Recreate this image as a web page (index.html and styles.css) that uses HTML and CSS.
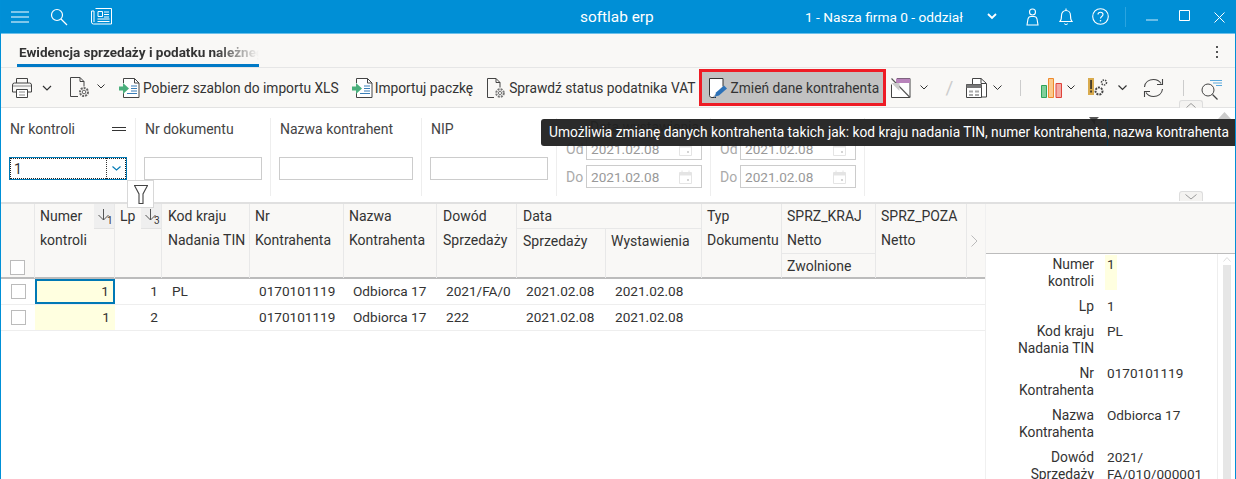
FILE: index.html
```html
<!DOCTYPE html>
<html lang="pl">
<head>
<meta charset="utf-8">
<title>softlab erp</title>
<link rel="stylesheet" href="styles.css">
</head>
<body>
<div class="app">
  <header class="topbar">
    <svg class="ti t-menu" width="18" height="12" viewBox="0 0 18 12"><path d="M0 1h18M0 6h18M0 11h18" stroke="#fff" fill="none"/></svg>
    <svg class="ti t-search" width="18" height="18" viewBox="0 0 18 18"><circle cx="7" cy="7" r="5.500" stroke="#fff" fill="none" stroke-width="1.200"/><path d="M11 11l6 6" stroke="#fff" stroke-width="1.200"/></svg>
    <svg class="ti t-news" width="21" height="17" viewBox="0 0 21 17"><path d="M4.500.5h16v15.500h-18a2 2 0 0 1-2-2V3h2.500v11" stroke="#fff" fill="none"/><path d="M7 3.500h4.500v5H7zM13 4h5M13 6.500h5M13 9h5M6.500 11h12M6.500 13.500h12" stroke="#fff" fill="none"/></svg>
    <span class="app-title">softlab erp</span>
    <span class="company">1 - Nasza firma 0 - oddział</span>
    <svg class="ti t-chev" width="10" height="7" viewBox="0 0 10 7"><path d="M1 1l4 4 4-4" stroke="#fff" stroke-width="1.800" fill="none"/></svg>
    <svg class="ti t-user" width="13" height="18" viewBox="0 0 13 18"><circle cx="6.500" cy="4" r="3" stroke="#fff" fill="none" stroke-width="1.100"/><path d="M1 17l1-6c.3-1.500 1.500-2.500 3-2.500h3c1.500 0 2.700 1 3 2.500l1 6z" stroke="#fff" fill="none" stroke-width="1.100"/></svg>
    <svg class="ti t-bell" width="14" height="18" viewBox="0 0 14 18"><path d="M1 13.500c1.500-1.500 1.500-3 1.500-6 0-3 2-5 4.500-5s4.500 2 4.500 5c0 3 0 4.500 1.500 6zM7 .5v2M5.500 15.500c.3 1.400 2.700 1.400 3 0" stroke="#fff" fill="none" stroke-width="1.100"/></svg>
    <svg class="ti t-help" width="17" height="17" viewBox="0 0 17 17"><circle cx="8.500" cy="8.500" r="7.800" stroke="#fff" fill="none" stroke-width="1.100"/><path d="M6 6.500c0-3 5-3 5 0 0 2-2.500 2-2.500 4" stroke="#fff" fill="none" stroke-width="1.100"/><circle cx="8.500" cy="12.800" r=".8" fill="#fff"/></svg>
    <span class="win-sep"></span>
    <svg class="ti t-min" width="12" height="2" viewBox="0 0 12 2"><path d="M0 1h12" stroke="#cfeaf8" stroke-width="1"/></svg>
    <svg class="ti t-max" width="11" height="11" viewBox="0 0 11 11"><path d="M.5.500h10v10H.5z" stroke="#fff" fill="none"/></svg>
    <svg class="ti t-close" width="11" height="11" viewBox="0 0 11 11"><path d="M.5.500l10 10M10.500.500l-10 10" stroke="#fff" fill="none"/></svg>
  </header>

  <div class="tabbar">
    <div class="tab"><span class="tab-text">Ewidencja sprzedaży i podatku należnego</span></div>
    <svg class="kebab" width="3" height="13" viewBox="0 0 3 13"><path d="M0 0h2v2H0zM0 5h2v2H0zM0 10h2v2H0z" fill="#555"/></svg>
  </div>

  <div class="toolbar">
    <svg class="b-print" width="20" height="20" viewBox="0 0 20 20"><path d="M4.500 5V.5h11V5M.5 14V7a2 2 0 0 1 2-2h15a2 2 0 0 1 2 2v7h-4M4.500 14H.5" stroke="#444" fill="none"/><path d="M4.500 11.500h11v8h-11z" stroke="#444" fill="#fff"/><path d="M1 8h18" stroke="#888"/><path d="M7 14h6M7 17h6" stroke="#888"/></svg>
    <svg class="chev b-c1" width="10" height="6" viewBox="0 0 10 6"><path d="M1 1l4 4 4-4" stroke="#333" stroke-width="1.200" fill="none"/></svg>
    <svg class="b-doc" width="21" height="21" viewBox="0 0 21 21"><path d="M8 19.500H.5V.5H10l4 4v5" stroke="#444" fill="none"/><path d="M10 .5v4h4" stroke="#444" fill="none"/><circle cx="14" cy="15" r="4" stroke="#666" stroke-width="2" stroke-dasharray="2 1" fill="none"/><circle cx="14" cy="15" r="1.800" stroke="#666" fill="none"/></svg>
    <svg class="chev b-c2" width="8" height="5" viewBox="0 0 8 5"><path d="M.5.500L4 4 7.500.500" stroke="#333" fill="none"/></svg>
    <button class="tbtn b-t1">
      <svg width="21" height="20" viewBox="0 0 21 20"><path d="M4.500 5V.5h11l4.500 4.500v14.500H4.500V15" stroke="#444" fill="#fff"/><path d="M15.500.5V5H20" stroke="#444" fill="none"/><path d="M12 8h6M12 10.500h6M12 13h6M8 15.500h10" stroke="#3b7fb8"/><path d="M0 8.500h4V5l6 5.500-6 5.500v-3.500H0z" fill="#4aaf7c"/></svg>
      <span>Pobierz szablon do importu XLS</span>
    </button>
    <button class="tbtn b-t2">
      <svg width="21" height="20" viewBox="0 0 21 20"><path d="M4.500 5V.5h11l4.500 4.500v14.500H4.500V15" stroke="#444" fill="#fff"/><path d="M15.500.5V5H20" stroke="#444" fill="none"/><path d="M12 8h6M12 10.500h6M12 13h6M8 15.500h10" stroke="#3b7fb8"/><path d="M0 8.500h4V5l6 5.500-6 5.500v-3.500H0z" fill="#4aaf7c"/></svg>
      <span>Importuj paczkę</span>
    </button>
    <button class="tbtn b-t3">
      <svg width="19" height="20" viewBox="0 0 19 20"><path d="M7 19.500H.5V.5H9l4 4v5" stroke="#444" fill="none"/><path d="M9 .5v4h4" stroke="#444" fill="none"/><circle cx="13" cy="15" r="3.800" stroke="#777" stroke-width="2" stroke-dasharray="2 1" fill="none"/><circle cx="13" cy="15" r="1.600" stroke="#777" fill="none"/></svg>
      <span>Sprawdź status podatnika VAT</span>
    </button>
    <button class="tbtn active">
      <svg width="19" height="20" viewBox="0 0 19 20"><path d="M3 19.500c-1.500 0-2.500-1-2.500-2V.5H14v8" stroke="#333" fill="#fff"/><path d="M3 19.500h4" stroke="#333"/><path d="M6 18.500l1-4 8-7 3 3-8 7z" fill="#2d72b8"/><path d="M5 19.500l1.500-1" stroke="#2d72b8"/></svg>
      <span>Zmień dane kontrahenta</span>
    </button>
    <svg class="b-cal" width="20" height="20" viewBox="0 0 20 20"><path d="M.5 6.500V19.500h18.500V.5H6" stroke="#444" fill="#fff"/><path d="M5 .5h14V5H5z" fill="#b883bb"/><path d="M.5.500l18.500 19" stroke="#555" stroke-width="1.100"/><path d="M.5 5h8v8" fill="#ccc"/></svg>
    <svg class="chev b-c3" width="8" height="5" viewBox="0 0 8 5"><path d="M.5.500L4 4 7.500.500" stroke="#333" fill="none"/></svg>
    <span class="slash">/</span>
    <svg class="b-copy" width="21" height="20" viewBox="0 0 21 20"><path d="M6.500 6V.5H15l5.500 5v13.500h-5" stroke="#444" fill="#fff"/><path d="M15 .5v5h5" stroke="#444" fill="none"/><path d="M.5 6.500h15v13H.5z" stroke="#444" fill="#fff"/><path d="M.5 6.500h15v3.500H.5z" fill="#777"/><path d="M3 12.500h4v2H3zM9 12.500h4v2H9zM3 16h4v2H3zM9 16h4v2H9z" fill="#aaa"/></svg>
    <svg class="chev b-c4" width="9" height="6" viewBox="0 0 9 6"><path d="M.5.500L4.500 4.500 8.500.500" stroke="#333" fill="none"/></svg>
    <span class="vsep b-s1"></span>
    <svg class="b-chart" width="21" height="20" viewBox="0 0 21 20"><path d="M.5 7.500h5v12h-5z" fill="#7fcf9a" stroke="#2ea35a"/><path d="M7.500.5h5v19h-5z" fill="#fbc98c" stroke="#ee8a2c"/><path d="M15 5.500h5.500v14H15z" fill="#f4a9a4" stroke="#e0433a"/></svg>
    <svg class="chev b-c5" width="8" height="5" viewBox="0 0 8 5"><path d="M.5.500L4 4 7.500.500" stroke="#333" fill="none"/></svg>
    <svg class="b-warn" width="20" height="20" viewBox="0 0 20 20"><path d="M0 0h6v17H0z" fill="#d9ab4e"/><path d="M2.300 2h1.500v9H2.300zM2.300 12.500h1.500v2H2.300z" fill="#222"/><circle cx="11" cy="13" r="3.500" stroke="#444" stroke-width="2" stroke-dasharray="2 1" fill="none"/><circle cx="16" cy="4.500" r="2.500" stroke="#444" stroke-width="1.500" stroke-dasharray="1.500 1" fill="none"/></svg>
    <svg class="chev b-c6" width="9" height="6" viewBox="0 0 9 6"><path d="M.5.500L4.500 4.500 8.500.500" stroke="#333" stroke-width="1.200" fill="none"/></svg>
    <svg class="b-refresh" width="21" height="20" viewBox="0 0 21 20"><path d="M1.500 9C2 4 6 1.500 10.500 1.500c3.500 0 6 1.500 7.500 4" stroke="#444" fill="none" stroke-width="1.100"/><path d="M19.500 1v5.500H14" stroke="#444" fill="none" stroke-width="1.100"/><path d="M19.500 11c-.5 5-4.500 7.500-9 7.500-3.500 0-6-1.500-7.500-4" stroke="#444" fill="none" stroke-width="1.100"/><path d="M1.500 19v-5.500H7" stroke="#444" fill="none" stroke-width="1.100"/></svg>
    <span class="vsep b-s2"></span>
    <svg class="b-find" width="21" height="20" viewBox="0 0 21 20"><circle cx="7" cy="10" r="6" stroke="#444" fill="none"/><path d="M11.500 14.500l5 5" stroke="#444" stroke-width="1.300"/><path d="M9 .5h12M12 3h9M15 5.500h6" stroke="#5aa9dc"/></svg>
    <span class="collapse up"><svg width="10" height="5" viewBox="0 0 10 5"><path d="M.5 4.500L5 .5l4.500 4" stroke="#999" fill="none"/></svg></span>
  </div>

  <section class="filters">
    <div class="fcol">
      <div class="flabel-row"><span>Nr kontroli</span><span class="eq"></span></div>
      <div class="combo"><span class="combo-text">1</span><span class="combo-btn"><svg width="9" height="5" viewBox="0 0 9 5"><path d="M.5.500l4 3.500 4-3.500" stroke="#0079b5" stroke-width="1.100" fill="none"/></svg></span></div>
    </div>
    <div class="fcol">
      <div class="flabel-row"><span>Nr dokumentu</span></div>
      <div class="finput"></div>
    </div>
    <div class="fcol">
      <div class="flabel-row"><span>Nazwa kontrahent</span></div>
      <div class="finput"></div>
    </div>
    <div class="fcol">
      <div class="flabel-row"><span>NIP</span></div>
      <div class="finput"></div>
    </div>
    <div class="dcol">
      <div class="dtitle">Data wystawienia</div>
      <div class="drow"><span>Od</span><div class="dinput">2021.02.08<svg class="cal" width="13" height="14" viewBox="0 0 13 14"><path d="M.5 2.500h12v11H.5zM3 .5v3M10 .5v3" stroke="#e4e4e4" fill="none"/><path d="M.5 2.500h12v3H.5z" fill="#e4e4e4"/><path d="M8 9h2v2H8z" fill="#d4d4d4"/></svg></div></div>
      <div class="drow"><span>Do</span><div class="dinput">2021.02.08<svg class="cal" width="13" height="14" viewBox="0 0 13 14"><path d="M.5 2.500h12v11H.5zM3 .5v3M10 .5v3" stroke="#e4e4e4" fill="none"/><path d="M.5 2.500h12v3H.5z" fill="#e4e4e4"/><path d="M8 9h2v2H8z" fill="#d4d4d4"/></svg></div></div>
    </div>
    <div class="dcol">
      <div class="dtitle"></div>
      <div class="drow"><span>Od</span><div class="dinput">2021.02.08<svg class="cal" width="13" height="14" viewBox="0 0 13 14"><path d="M.5 2.500h12v11H.5zM3 .5v3M10 .5v3" stroke="#e4e4e4" fill="none"/><path d="M.5 2.500h12v3H.5z" fill="#e4e4e4"/><path d="M8 9h2v2H8z" fill="#d4d4d4"/></svg></div></div>
      <div class="drow"><span>Do</span><div class="dinput">2021.02.08<svg class="cal" width="13" height="14" viewBox="0 0 13 14"><path d="M.5 2.500h12v11H.5zM3 .5v3M10 .5v3" stroke="#e4e4e4" fill="none"/><path d="M.5 2.500h12v3H.5z" fill="#e4e4e4"/><path d="M8 9h2v2H8z" fill="#d4d4d4"/></svg></div></div>
    </div>
    <svg class="pin" width="10" height="8" viewBox="0 0 10 8"><path d="M0 0h10L6 4v4L3 4z" fill="#555"/></svg>
    <svg class="corner" width="13" height="7" viewBox="0 0 13 7"><path d="M0 7L6.500 0 13 7z" fill="#ccc"/></svg>
    <span class="collapse down"><svg width="12" height="6" viewBox="0 0 12 6"><path d="M.5.500L6 5l5.500-4.500" stroke="#999" fill="none"/></svg></span>
  </section>

  <main class="content">
    <div class="grid">
      <div class="thead">
        <div class="th c-check"><span class="cb"></span></div>
        <div class="th c-num"><span>Numer</span><span class="sort"><svg width="11" height="12" viewBox="0 0 11 12"><path d="M5.500 0v11M.5 6l5 5 5-5" stroke="#555" fill="none"/></svg><sub>1</sub></span><span class="l2">kontroli</span></div>
        <div class="th c-lp"><span>Lp</span><span class="sort"><svg width="11" height="12" viewBox="0 0 11 12"><path d="M5.500 0v11M.5 6l5 5 5-5" stroke="#555" fill="none"/></svg><sub>3</sub></span></div>
        <div class="th c-kod"><span>Kod kraju</span><span class="l2">Nadania TIN</span></div>
        <div class="th c-nr"><span>Nr</span><span class="l2">Kontrahenta</span></div>
        <div class="th c-naz"><span>Nazwa</span><span class="l2">Kontrahenta</span></div>
        <div class="th c-dow"><span>Dowód</span><span class="l2">Sprzedaży</span></div>
        <div class="th c-data">Data</div>
        <div class="th c-ds">Sprzedaży</div>
        <div class="th c-dw">Wystawienia</div>
        <div class="th c-typ"><span>Typ</span><span class="l2">Dokumentu</span></div>
        <div class="th c-kraj"><span>SPRZ_KRAJ</span><span class="l2">Netto</span><span class="sub-h">Zwolnione</span></div>
        <div class="th c-poza"><span>SPRZ_POZA</span><span class="l2">Netto</span></div>
        <div class="th c-more"><svg width="7" height="12" viewBox="0 0 7 12"><path d="M.5.500L6 6 .5 11.500" stroke="#bbb" fill="none"/></svg></div>
      </div>
      <div class="tr">
        <div class="td"><span class="cb small"></span></div>
        <div class="td num cur">1</div>
        <div class="td right lp">1</div>
        <div class="td txt pl">PL</div>
        <div class="td txt">0170101119</div>
        <div class="td txt">Odbiorca 17</div>
        <div class="td txt clip">2021/FA/010/000001</div>
        <div class="td txt d">2021.02.08</div>
        <div class="td txt">2021.02.08</div>
        <div class="td"></div><div class="td"></div><div class="td"></div><div class="td"></div>
      </div>
      <div class="tr">
        <div class="td"><span class="cb small"></span></div>
        <div class="td num">1</div>
        <div class="td right lp">2</div>
        <div class="td txt"></div>
        <div class="td txt">0170101119</div>
        <div class="td txt">Odbiorca 17</div>
        <div class="td txt clip">222</div>
        <div class="td txt d">2021.02.08</div>
        <div class="td txt">2021.02.08</div>
        <div class="td"></div><div class="td"></div><div class="td"></div><div class="td"></div>
      </div>
    </div>
    <aside class="detail">
      <div class="detail-head"></div>
      <div class="detail-body">
        <dl class="dlist">
          <dt>Numer<br>kontroli</dt><dd class="hl">1</dd>
          <dt>Lp</dt><dd>1</dd>
          <dt>Kod kraju<br>Nadania TIN</dt><dd>PL</dd>
          <dt>Nr<br>Kontrahenta</dt><dd>0170101119</dd>
          <dt>Nazwa<br>Kontrahenta</dt><dd>Odbiorca 17</dd>
          <dt>Dowód<br>Sprzedaży</dt><dd>2021/<br>FA/010/000001</dd>
        </dl>
        <div class="vscroll"><svg width="8" height="5" viewBox="0 0 8 5"><path d="M.5 4.500L4 .5l3.500 4" stroke="#ddd" fill="none"/></svg><span class="thumb"></span></div>
      </div>
    </aside>
  </main>

  <div class="funnel"><svg width="14" height="19" viewBox="0 0 14 19"><path d="M.5.500h13L9 9v9.500H5V9z" stroke="#444" fill="none" stroke-width="1.100"/></svg></div>
  <div class="tooltip">Umożliwia zmianę danych kontrahenta takich jak: kod kraju nadania TIN, numer kontrahenta, nazwa kontrahenta</div>
</div>
</body>
</html>
```
FILE: styles.css
```css
* { box-sizing: border-box; }
html, body { margin: 0; height: 100%; overflow: hidden; }
body { font-family: Roboto, "Liberation Sans", sans-serif; font-size: 13px; color: #333; background: #fff; }
svg { display: block; flex: none; }

.app { position: relative; width: 1236px; height: 479px; border-left: 1px solid #0090d7; border-right: 1px solid #0090d7; display: flex; flex-direction: column; overflow: hidden; }

/* title bar */
.topbar { height: 34px; flex: none; margin: 0 -1px; padding-left: 11px; background: #008fd6; border-bottom: 1px solid #6cc0ea; display: flex; align-items: center; color: #fff; }
.t-search { margin-left: 21px; }
.t-news { margin-left: 23px; }
.app-title { margin-left: 468px; font-size: 15.4px; width: 73px; white-space: nowrap; }
.company { margin-left: 152px; font-size: 13.7px; width: 158px; white-space: nowrap; }
.t-chev { margin-left: 24px; }
.t-user { margin-left: 29px; }
.t-bell { margin-left: 20px; }
.t-help { margin-left: 19px; }
.win-sep { margin-left: 16px; width: 1px; height: 20px; background: #2aa4e0; }
.t-min { margin-left: 20px; margin-top: 6px; }
.t-max { margin-left: 21px; margin-top: -2px; }
.t-close { margin-left: 24px; margin-top: 2px; }

/* tab strip */
.tabbar { height: 34px; flex: none; background: #f9f8f6; border-bottom: 1px solid #e6e6e6; display: flex; align-items: flex-start; justify-content: space-between; padding: 0 16px; }
.tab { width: 242px; height: 33px; border-bottom: 3px solid #0079c6; overflow: hidden; padding: 10px 0 0 2px; white-space: nowrap; }
.tab-text { display: block; font-weight: 700; font-size: 13.5px; line-height: 17px; color: #333; -webkit-mask-image: linear-gradient(90deg, #000 82%, transparent 100%); mask-image: linear-gradient(90deg, #000 82%, transparent 100%); width: 240px; overflow: hidden; }
.kebab { margin-top: 12px; }

/* toolbar */
.toolbar { position: relative; height: 40px; flex: none; background: #f9f8f6; border-bottom: 1px solid #e3e3e3; display: flex; align-items: center; padding-left: 11px; }
.tbtn { display: flex; align-items: center; gap: 3px; padding: 0; border: 0; background: none; font: inherit; font-size: 13.75px; color: #333; white-space: nowrap; }
.b-c1 { margin-left: 10px; }
.b-doc { margin-left: 18px; }
.b-c2 { margin-left: 6px; margin-top: -2px; }
.b-t1 { margin-left: 14px; }
.b-t2 { margin-left: 13px; gap: 2px; }
.b-t3 { margin-left: 14px; gap: 3px; }
.tbtn.active { margin-left: 3px; width: 187px; height: 37px; border: 3px solid #ee1c25; background: #c2c2c2; padding-left: 7px; gap: 3px; }
.b-cal { margin-left: 5px; }
.b-c3 { margin-left: 9px; }
.slash { margin-left: 18px; width: 10px; color: #ccc; font-size: 19px; }
.b-copy { margin-left: 10px; }
.b-c4 { margin-left: 6px; }
.vsep { width: 1px; height: 16px; background: #ccc; }
.b-s1 { margin-left: 18px; }
.b-chart { margin-left: 20px; }
.b-c5 { margin-left: 5px; }
.b-warn { margin-left: 13px; }
.b-c6 { margin-left: 10px; }
.b-refresh { margin-left: 16px; }
.b-s2 { margin-left: 19px; }
.b-find { margin-left: 17px; margin-top: 4px; }
.collapse { position: absolute; left: 1178px; width: 24px; height: 10px; display: flex; align-items: center; justify-content: center; background: #f4f3f1; border: 1px solid #ddd; }
.collapse.up { top: 32px; height: 9px; border-bottom: 0; border-radius: 3px 3px 0 0; }
.collapse.down { top: 83px; border-bottom: 0; border-radius: 3px 3px 0 0; }

/* filter panel */
.filters { position: relative; height: 96px; flex: none; background: #fff; display: flex; padding-top: 10px; border-bottom: 2px solid #e0e0e0; }
.fcol { height: 78px; border-right: 1px solid #eee; padding: 0 8px; width: 135px; }
.fcol:nth-child(3) { width: 151px; }
.fcol:first-child { padding-right: 7px; }
.flabel-row { display: flex; justify-content: space-between; align-items: center; height: 22px; padding-left: 1px; color: #444; font-size: 14px; }
.eq { width: 14px; height: 4px; border-top: 1px solid #333; border-bottom: 1px solid #333; margin-right: 2px; }
.finput { margin-top: 17px; height: 23px; border: 1px solid #ccc; background: #fff; }
.combo { margin-top: 17px; height: 23px; width: 118px; display: flex; border: 1px solid #0079b5; outline: 1px dotted #222; outline-offset: -2px; background: #fff; }
.combo-text { flex: 1; padding: 3px 0 0 4px; font-size: 14px; line-height: 16px; border-right: 1px dotted #333; }
.combo-btn { width: 19px; display: flex; align-items: center; justify-content: center; }
.dcol { width: 154px; height: 78px; border-right: 1px solid #eee; padding-left: 9px; color: #aaa; }
.dtitle { height: 19px; padding-left: 24px; line-height: 18px; font-size: 14px; white-space: nowrap; color: #555; }
.drow { display: flex; align-items: center; height: 23px; margin-bottom: 5px; font-size: 14px; }
.drow span { width: 20px; }
.dinput { width: 116px; height: 23px; border: 1px solid #ccc; padding-left: 4px; line-height: 22px; display: flex; align-items: center; justify-content: space-between; padding-right: 9px; color: #999; font-size: 13.6px; }
.pin { position: absolute; left: 1088px; top: 9px; }
.corner { position: absolute; left: 1217px; top: 4px; }

/* table + detail */
.content { flex: 1; min-height: 0; display: flex; background: #fff; }
.grid { width: 984px; flex: none; }
.thead, .tr { display: grid; grid-template-columns: 34px 80px 47px 88px 94px 93px 80px 89px 96px 80px 94px 91px 18px; }
.thead { grid-template-rows: 25px 25px 24px; height: 75px; background: #f9f8f6; border-bottom: 2px solid #bcbcbc; }
.th { position: relative; border-right: 1px solid #e8e8e8; padding: 3px 0 0 5px; line-height: 18px; color: #333; font-size: 14px; white-space: nowrap; }
.th > span { display: block; }
.th .l2 { position: absolute; top: 27px; left: 5px; }
.c-kod, .c-dow { padding-left: 6px; }
.c-kod .l2, .c-dow .l2 { left: 6px; }
.c-data, .c-ds { padding-left: 6px; }
.c-check { grid-row: 1 / 4; grid-column: 1; padding: 0; }
.c-check .cb { position: absolute; left: 9px; top: 56px; }
.cb { display: block; width: 15px; height: 15px; border: 1px solid #bbb; background: #fff; }
.cb.small { margin: 5px 0 0 10px; }
.c-num { grid-row: 1 / 4; grid-column: 2; }
.c-lp { grid-row: 1 / 4; grid-column: 3; }
.c-kod { grid-row: 1 / 4; grid-column: 4; }
.c-nr { grid-row: 1 / 4; grid-column: 5; }
.c-naz { grid-row: 1 / 4; grid-column: 6; }
.c-dow { grid-row: 1 / 4; grid-column: 7; }
.c-data { grid-row: 1; grid-column: 8 / 10; border-bottom: 1px solid #e8e8e8; }
.c-ds { grid-row: 2 / 4; grid-column: 8; }
.c-dw { grid-row: 2 / 4; grid-column: 9; }
.c-typ { grid-row: 1 / 4; grid-column: 10; }
.c-kraj { grid-row: 1 / 4; grid-column: 11; }
.c-poza { grid-row: 1 / 4; grid-column: 12; }
.c-more { grid-row: 1 / 4; grid-column: 13; border-right: 0; padding: 31px 0 0 4px; }
.sub-h { position: absolute; left: 0; right: 0; top: 49px; height: 24px; padding: 3px 0 0 5px; border-top: 1px solid #e8e8e8; }
.sort { position: absolute !important; top: 0; right: 0; width: 20px; height: 25px; background: #efefef; border-bottom: 1px solid #e2e2e2; padding: 5px 0 0 4px; }
.sort sub { position: absolute; left: 13px; top: 11px; font-size: 10px; line-height: 12px; }
.tr { height: 26px; border-bottom: 1px solid #eee; }
.td { font-size: 13.6px; line-height: 25px; white-space: nowrap; overflow: hidden; color: #333; }
.td.txt { padding-left: 9px; }
.td.pl { padding-left: 10px; }
.td.clip { width: 74px; }
.td.right { text-align: right; padding-right: 4px; }
.td.num { text-align: right; padding-right: 5px; background: #ffffe0; }
.td.cur { border: 2px solid #0079b5; line-height: 21px; padding-right: 4px; }

.detail { flex: 1; min-width: 0; border-left: 1px solid #f0f0f0; display: flex; flex-direction: column; background: #fff; overflow: hidden; }
.detail-head { height: 50px; flex: none; background: #f9f8f6; border-bottom: 1px solid #bcbcbc; margin-left: -1px; }
.detail-body { flex: 1; min-height: 0; display: flex; justify-content: space-between; overflow: hidden; }
.dlist { margin: 0; padding-top: 2px; display: grid; grid-template-columns: 108px 112px; grid-auto-rows: min-content; row-gap: 8px; line-height: 17px; font-size: 13.8px; color: #333; }
.dlist dt { text-align: right; white-space: nowrap; }
.dlist dd { margin: 0 0 0 13px; white-space: nowrap; font-size: 13.6px; }
.dlist dd.hl { background: #ffffe0; width: 12px; height: 35px; margin: -1px 0 0 11px; padding-left: 2px; padding-top: 1px; }
.vscroll { width: 18px; border-left: 1px solid #eee; padding: 3px 0 0 5px; flex: none; }
.thumb { display: block; width: 8px; height: 220px; margin-top: 3px; background: #e6e6e6; }

/* overlays */
.funnel { position: absolute; left: 126px; top: 180px; width: 27px; height: 28px; background: #fff; border: 1px solid #d8d8d8; display: flex; align-items: center; justify-content: center; }
.tooltip { position: absolute; left: 540px; top: 119px; width: 696px; height: 27px; padding-left: 8px; background: rgba(32, 32, 32, .95); color: #fff; border-radius: 3px 0 0 3px; font-size: 13.74px; line-height: 27px; white-space: nowrap; }
.tooltip::after { content: ""; position: absolute; left: 566px; top: 0; width: 1px; height: 27px; background: #0e3448; }
```
